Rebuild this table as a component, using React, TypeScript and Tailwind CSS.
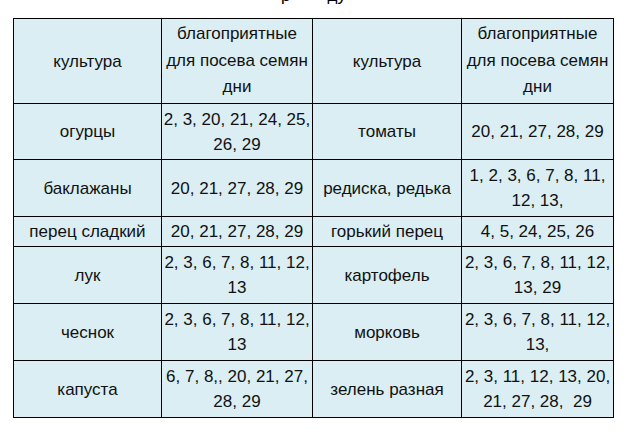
import React from "react";

const rows: { h: number; a: string[]; b: string[]; c: string[]; d: string[] }[] = [
  { h: 56, a: ["огурцы"], b: ["2, 3, 20, 21, 24, 25,", "26, 29"], c: ["томаты"], d: ["20, 21, 27, 28, 29"] },
  { h: 57, a: ["баклажаны"], b: ["20, 21, 27, 28, 29"], c: ["редиска, редька"], d: ["1, 2, 3, 6, 7, 8, 11,", "12, 13,"] },
  { h: 30, a: ["перец сладкий"], b: ["20, 21, 27, 28, 29"], c: ["горький перец"], d: ["4, 5, 24, 25, 26"] },
  { h: 57, a: ["лук"], b: ["2, 3, 6, 7, 8, 11, 12,", "13"], c: ["картофель"], d: ["2, 3, 6, 7, 8, 11, 12,", "13, 29"] },
  { h: 57, a: ["чеснок"], b: ["2, 3, 6, 7, 8, 11, 12,", "13"], c: ["морковь"], d: ["2, 3, 6, 7, 8, 11, 12,", "13,"] },
  { h: 57, a: ["капуста"], b: ["6, 7, 8,, 20, 21, 27,", "28, 29"], c: ["зелень разная"], d: ["2, 3, 11, 12, 13, 20,", "21, 27, 28,\u00a0 29"] },
];

function Cell({ lines }: { lines: string[] }) {
  return (
    <td className="border border-black bg-[#daeef3] p-0 text-center align-middle">
      {lines.map((l, i) => (
        <div key={i} className="whitespace-nowrap leading-[25px]">
          {l}
        </div>
      ))}
    </td>
  );
}

export default function App() {
  return (
    <div
      className="w-[631px] h-[435px] bg-white overflow-hidden text-[17px] text-[#111111]"
      style={{ fontFamily: '"Liberation Sans", Arial, sans-serif' }}
    >
      <div className="h-[18px] overflow-hidden flex items-start">
        <div className="mt-[-13px] leading-[17px] flex text-black">
          <span className="ml-[281px]">р</span>
          <span className="ml-[37px]">ду</span>
        </div>
      </div>
      <div className="pl-[13px]">
        <table className="border-collapse table-fixed w-[601px]">
          <colgroup>
            <col className="w-[148px]" />
            <col className="w-[151px]" />
            <col className="w-[149px]" />
            <col className="w-[152px]" />
          </colgroup>
          <tbody>
            <tr className="h-[85px]">
              <Cell lines={["культура"]} />
              <td className="border border-black bg-[#daeef3] p-0 text-center align-middle">
                <div className="leading-[26.5px] whitespace-nowrap">благоприятные</div>
                <div className="leading-[26.5px] whitespace-nowrap">для посева семян</div>
                <div className="leading-[26.5px] whitespace-nowrap">дни</div>
              </td>
              <Cell lines={["культура"]} />
              <td className="border border-black bg-[#daeef3] p-0 text-center align-middle">
                <div className="leading-[26.5px] whitespace-nowrap">благоприятные</div>
                <div className="leading-[26.5px] whitespace-nowrap">для посева семян</div>
                <div className="leading-[26.5px] whitespace-nowrap">дни</div>
              </td>
            </tr>
            {rows.map((r, i) => (
              <tr key={i} style={{ height: r.h }}>
                <Cell lines={r.a} />
                <Cell lines={r.b} />
                <Cell lines={r.c} />
                <Cell lines={r.d} />
              </tr>
            ))}
          </tbody>
        </table>
      </div>
    </div>
  );
}
